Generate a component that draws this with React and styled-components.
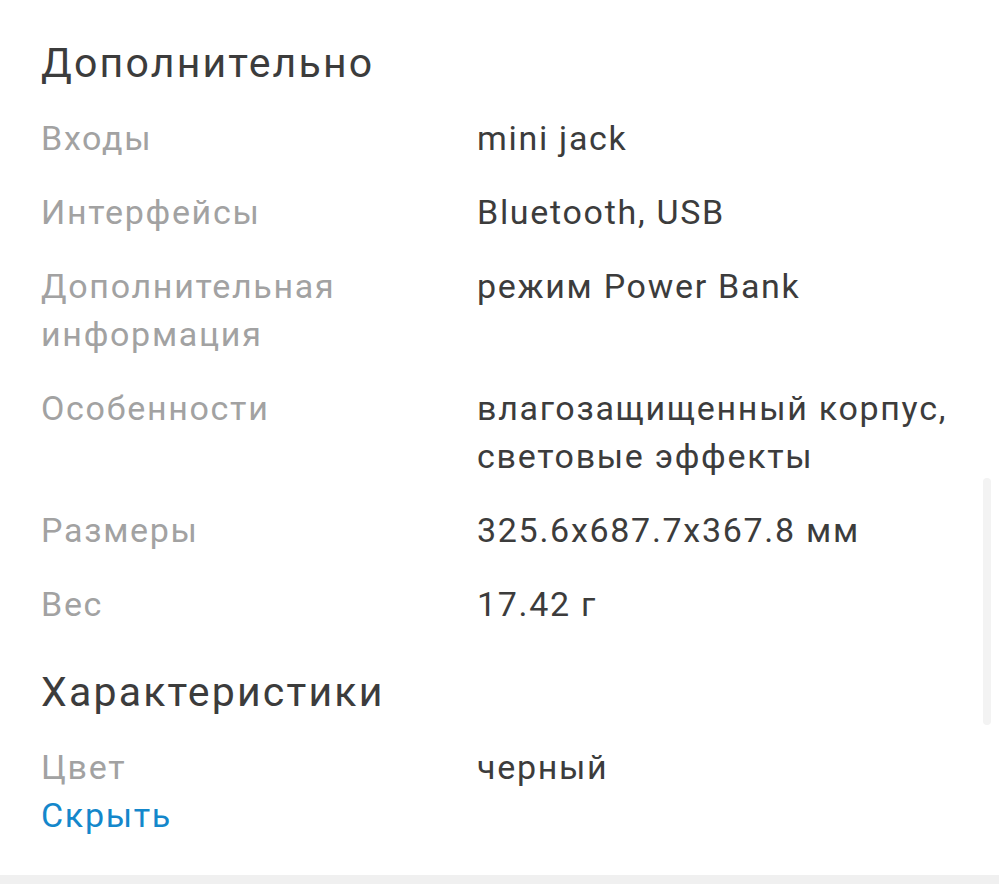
import React from "react";
import styled, { createGlobalStyle } from "styled-components";

const Global = createGlobalStyle`
  html, body { margin: 0; padding: 0; background: #ffffff; }
  body { font-family: Roboto, "Noto Sans", "Liberation Sans", sans-serif; overflow: hidden; }
`;

const Screen = styled.div`
  position: relative;
  width: 999px;
  height: 884px;
  overflow: hidden;
  background: #ffffff;
  display: flex;
  flex-direction: column;
`;

const Content = styled.main`
  padding: 38px 0 36px 41px;
  display: flex;
  flex-direction: column;
`;

const Section = styled.section`
  display: flex;
  flex-direction: column;
  gap: 26px;
  & + & { margin-top: 39px; }
`;

const Heading = styled.h2`
  margin: 0;
  font-size: 41px;
  line-height: 50px;
  letter-spacing: 2.2px;
  font-weight: 400;
  color: #3c3c3c;
`;

const Rows = styled.dl`
  margin: 0;
  display: flex;
  flex-direction: column;
  gap: 26px;
`;

const Row = styled.div`
  display: grid;
  grid-template-columns: 436px 500px;
  font-size: 34px;
  line-height: 48px;
  letter-spacing: 1.7px;
`;

const Label = styled.dt`
  margin: 0;
  color: #a2a2a2;
`;

const Value = styled.dd`
  margin: 0;
  color: #3c3c3c;
`;

const HideLink = styled.a`
  display: inline-block;
  font-size: 34px;
  line-height: 48px;
  letter-spacing: 1.7px;
  color: #1487cb;
  text-decoration: none;
  cursor: pointer;
`;

const Footer = styled.div`
  flex: 1;
  background: #f0f0f0;
`;

const ScrollThumb = styled.div`
  position: absolute;
  left: 983px;
  top: 478px;
  width: 8px;
  height: 247px;
  border-radius: 4px;
  background: #f3f3f3;
`;

const extra = [
  ["Входы", "mini jack"],
  ["Интерфейсы", "Bluetooth, USB"],
  ["Дополнительная информация", "режим Power Bank"],
  ["Особенности", "влагозащищенный корпус, световые эффекты"],
  ["Размеры", "325.6x687.7x367.8 мм"],
  ["Вес", "17.42 г"],
];

const specs = [["Цвет", "черный"]];

function SpecRows({ items }) {
  return (
    <Rows>
      {items.map(([k, v]) => (
        <Row key={k}>
          <Label>{k}</Label>
          <Value>{v}</Value>
        </Row>
      ))}
    </Rows>
  );
}

export default function App() {
  return (
    <Screen>
      <Global />
      <Content>
        <Section>
          <Heading>Дополнительно</Heading>
          <SpecRows items={extra} />
        </Section>
        <Section>
          <Heading>Характеристики</Heading>
          <div>
            <SpecRows items={specs} />
            <HideLink>Скрыть</HideLink>
          </div>
        </Section>
      </Content>
      <Footer />
      <ScrollThumb />
    </Screen>
  );
}
